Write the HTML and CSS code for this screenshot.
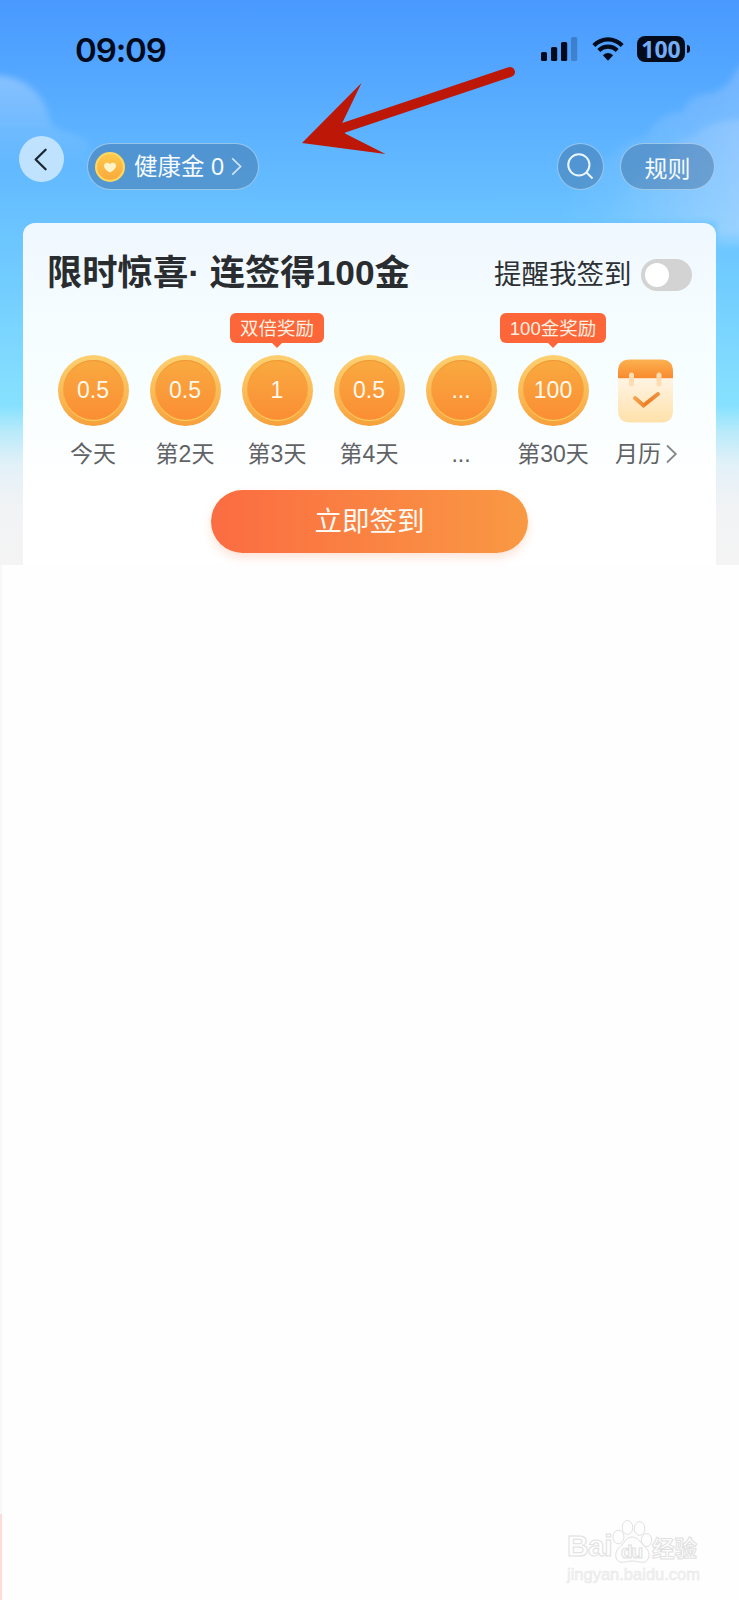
FILE: index.html
```html
<!DOCTYPE html>
<html lang="zh-CN">
<head>
<meta charset="utf-8">
<title>健康金</title>
<link rel="stylesheet" href="styles.css">
</head>
<body>
<main class="page">
  <section class="hero">
    <svg class="clouds" viewBox="0 0 739 565" aria-hidden="true">
      <defs>
        <linearGradient id="cl" x1="0" y1="0" x2="0" y2="1"><stop offset="0" stop-color="#fff" stop-opacity=".3"/><stop offset="1" stop-color="#fff" stop-opacity="0"/></linearGradient>
        <linearGradient id="cr" x1="0" y1="0" x2="1" y2="0"><stop offset="0" stop-color="#dfe6ff" stop-opacity="0"/><stop offset=".5" stop-color="#dfe6ff" stop-opacity=".12"/><stop offset="1" stop-color="#dfe6ff" stop-opacity=".24"/></linearGradient>
        <filter id="soft"><feGaussianBlur stdDeviation="3"/></filter>
      </defs>
      <g filter="url(#soft)">
        <path fill="url(#cl)" d="M-10 75C20 74 44 90 50 120C54 134 75 130 88 142L88 165H-10Z"/>
        <path fill="url(#cr)" d="M750 60Q738 66 731 80Q722 92 708 94Q688 95 683 112Q658 112 647 136Q625 140 614 154Q590 170 560 205L560 222H716V235H750Z"/>
        <path fill="url(#cr)" d="M750 120Q710 118 695 136Q670 140 660 165Q630 180 600 222H716V245H750Z"/>
      </g>
    </svg>

    <header class="status">
      <span class="clock">09:09</span>
      <div class="indicators">
        <svg class="signal" viewBox="0 0 37 24"><rect x="0" y="15" width="6" height="9" rx="1.6"/><rect x="10" y="10" width="6.2" height="14" rx="1.6"/><rect x="20" y="5" width="6.2" height="19" rx="1.6"/><rect x="30" y="0" width="6.2" height="24" rx="1.6" opacity=".22"/></svg>
        <svg class="wifi" viewBox="0 0 32 24"><g fill="none" stroke="#020b1c" stroke-width="4.2"><path d="M1.8 8.4Q8.2 2.3 16 2.3T30.2 8.4"/><path d="M6.8 13.5Q10.8 9.7 16 9.7T25.2 13.5"/></g><path d="M10.9 18.2Q16 13.9 21.1 18.2L16 23.8Z"/></svg>
        <div class="battery"><span class="level">100</span><i class="nub"></i></div>
      </div>
    </header>

    <nav class="topbar">
      <button class="back" aria-label="返回"><svg viewBox="0 0 14 24"><path d="M12.5 1.500L1.800 12L12.500 22.500"/></svg></button>
      <button class="pill balance">
        <svg class="gold" viewBox="0 0 30 30"><defs><linearGradient id="gg" x1="0" y1="0" x2="0" y2="1"><stop offset="0" stop-color="#ffc94a"/><stop offset="1" stop-color="#f9a93c"/></linearGradient></defs><circle cx="15" cy="15" r="15" fill="#ffd75e"/><circle cx="15" cy="15" r="12.8" fill="url(#gg)"/><path d="M15 20.500C12 19 9 16.500 9 13.800C9 10.500 13 9.800 15 12.300C17 9.800 21 10.500 21 13.800C21 16.500 18 19 15 20.500Z" fill="#fff3c8"/></svg>
        <span class="balance-text">健康金 0</span>
        <svg class="more" viewBox="0 0 11 20"><path d="M1 1.500L9.800 10L1 18.500"/></svg>
      </button>
      <button class="pill search" aria-label="搜索"><svg viewBox="0 0 28 28"><circle cx="12.3" cy="12.3" r="11"/><path d="M20 20L26.500 26.500"/></svg></button>
      <button class="pill rules">规则</button>
    </nav>

    <section class="card">
      <div class="card-head">
        <h1 class="title">限时惊喜· 连签得100金</h1>
        <div class="remind"><span>提醒我签到</span><span class="switch"><i class="knob"></i></span></div>
      </div>
      <div class="days">
        <div class="day"><div class="coin">0.5</div><div class="label">今天</div></div>
        <div class="day"><div class="coin">0.5</div><div class="label">第2天</div></div>
        <div class="day"><div class="badge">双倍奖励</div><div class="coin">1</div><div class="label">第3天</div></div>
        <div class="day"><div class="coin">0.5</div><div class="label">第4天</div></div>
        <div class="day"><div class="coin">...</div><div class="label">...</div></div>
        <div class="day"><div class="badge">100金奖励</div><div class="coin">100</div><div class="label">第30天</div></div>
        <div class="day">
          <svg class="calendar" viewBox="0 0 56 70">
            <defs>
              <linearGradient id="ct" x1="0" y1="0" x2="0" y2="1"><stop offset="0" stop-color="#fbb150"/><stop offset="1" stop-color="#f98a2e"/></linearGradient>
              <linearGradient id="cb" x1="0" y1="0" x2="0" y2="1"><stop offset="0" stop-color="#fff4e4"/><stop offset="1" stop-color="#ffe1aa"/></linearGradient>
              <linearGradient id="ck" x1="0" y1="0" x2="1" y2="0"><stop offset="0" stop-color="#f5a355"/><stop offset=".5" stop-color="#ef7c1f"/><stop offset="1" stop-color="#ee9144"/></linearGradient>
            </defs>
            <path d="M1 23V16Q1 4 13 4H44Q56 4 56 16V23Z" fill="url(#ct)"/>
            <path d="M1 23H56V55Q56 67 44 67H13Q1 67 1 55Z" fill="url(#cb)"/>
            <rect x="12" y="17" width="5" height="14" rx="2.5" fill="#ffdcb2"/><rect x="39.500" y="17" width="5" height="14" rx="2.5" fill="#ffdcb2"/>
            <path d="M18 42.500L26.500 50L41 38.500" fill="none" stroke="url(#ck)" stroke-width="4" stroke-linecap="round"/>
          </svg>
          <div class="label month">月历<svg viewBox="0 0 11 20"><path d="M1 1.500L9.800 10L1 18.500"/></svg></div>
        </div>
      </div>
      <button class="checkin">立即签到</button>
    </section>

    <svg class="arrow" viewBox="0 0 739 240" aria-hidden="true"><path d="M302 143L361.500 83L342 123.500L345 133.500L385.500 154Z" fill="#bd1708"/><path d="M340 129L510 72" stroke="#bd1708" stroke-width="10" stroke-linecap="round"/></svg>
  </section>

  <footer class="rest">
    <div class="edge"><i class="edge-gray"></i><i class="edge-pink"></i></div>
    <div class="mark">
      <div class="mark-row">
        <span class="bai">Bai</span>
        <span class="paw"><svg viewBox="0 0 40 43"><ellipse cx="6.500" cy="17" rx="5.500" ry="6.800"/><ellipse cx="15.500" cy="7.500" rx="5.300" ry="7"/><ellipse cx="27.500" cy="8.500" rx="5.300" ry="6.800"/><ellipse cx="34.500" cy="20" rx="5.200" ry="6.500"/><path d="M20 17C26 17 28 22 31 25C35 28 39 33 36 39C33 45 26 41 20 41C14 41 8 45 4.500 39C2 33 6 28 10 25C13 22 14 17 20 17Z"/></svg><span class="du">du</span></span>
        <span class="jy">经验</span>
      </div>
      <div class="site">jingyan.baidu.com</div>
    </div>
  </footer>
</main>
</body>
</html>
```

FILE: styles.css
```css
* { box-sizing: border-box; }
body { margin: 0; background: #fefefe; font-family: "Liberation Sans", "Noto Sans CJK SC", sans-serif; }
button { border: 0; padding: 0; font: inherit; background: none; }
svg { display: block; overflow: visible; }
.page { width: 739px; height: 1600px; display: flex; flex-direction: column; overflow: hidden; }

.hero { position: relative; height: 565px; background: linear-gradient(180deg, #4999ff 0, #57abff 95px, #68c1ff 210px, #72cdff 285px, #84deff 385px, #85e1ff 405px, #b9eafa 432px, #e3f1f8 465px, #f2f3f5 510px, #f4f4f4 565px); }
.clouds { position: absolute; inset: 0; width: 739px; height: 565px; }
.arrow { position: absolute; top: 0; left: 0; width: 739px; height: 240px; pointer-events: none; }

.status { position: relative; height: 98px; padding: 0 49px 0 75px; display: flex; justify-content: space-between; align-items: center; color: #020b1c; }
.clock { font: 600 33px/1 Inter, sans-serif; letter-spacing: -1.1px; padding-top: 3px; }
.indicators { display: flex; align-items: center; }
.signal { width: 37px; height: 24px; fill: #020b1c; margin-right: 14px; }
.wifi { width: 32px; height: 24px; fill: #020b1c; margin-right: 13px; }
.battery { display: flex; align-items: center; gap: 2px; }
.level { width: 48px; height: 26px; border-radius: 8px; background: #020b1c; color: #74adf5; font: 700 23px/26px "Noto Sans", sans-serif; text-align: center; }
.nub { width: 3px; height: 8px; border-radius: 0 4px 4px 0; background: #020b1c; }

.topbar { position: relative; height: 124.500px; padding: 38px 24px 0 19px; display: flex; align-items: flex-start; }
.back { width: 45px; height: 46px; border-radius: 50%; background: #bfe3ff; display: grid; place-items: center; padding-right: 3px; }
.back svg { width: 13px; height: 23px; fill: none; stroke: #1d2733; stroke-width: 2.5; stroke-linecap: round; stroke-linejoin: round; }
.pill { height: 47px; margin-top: 7px; border: 1px solid rgba(210, 236, 255, .55); border-radius: 24px; background: rgba(60, 105, 150, .43); color: #f5fbff; display: flex; align-items: center; }
.balance { width: 172px; margin-left: 23px; padding-left: 7px; }
.gold { width: 30px; height: 30px; }
.balance-text { font-size: 23.500px; line-height: 30px; margin-left: 9px; padding-top: 1px; white-space: nowrap; width: 89px; text-align: left; }
.more { width: 11px; height: 19px; fill: none; stroke: #cfe4f6; stroke-width: 1.8; margin-left: 8px; }
.search { width: 47px; margin-left: auto; justify-content: center; }
.search svg { width: 27px; height: 27px; fill: none; stroke: #eaf6ff; stroke-width: 2.1; }
.rules { width: 95px; margin-left: 16px; justify-content: center; font-size: 23px; }

.card { position: relative; width: 692.500px; height: 342.500px; margin-left: 23px; padding: 0 24px; border-radius: 12px 12px 0 0; background: linear-gradient(180deg, #eff7ff 0, #f5fcff 80px, #f7feff 150px, #fbfeff 215px, #fff 260px); display: flex; flex-direction: column; }
.card-head { height: 100px; display: flex; justify-content: space-between; align-items: center; }
.title { margin: 0; font-size: 35.300px; line-height: 50px; font-weight: 700; color: #2a2d30; white-space: nowrap; }
.remind { display: flex; align-items: center; gap: 9px; font-size: 27.500px; line-height: 40px; color: #2d3135; padding-top: 4px; white-space: nowrap; }
.switch { width: 51px; height: 32px; border-radius: 16px; background: #d3d3d3; display: flex; align-items: center; padding-left: 4px; }
.knob { width: 24px; height: 24px; border-radius: 50%; background: #fff; }

.days { display: grid; grid-template-columns: repeat(7, 92px); height: 167.500px; padding-top: 32px; }
.day { position: relative; display: flex; flex-direction: column; align-items: center; }
.coin { width: 71px; height: 71px; border-radius: 50%; border: 5px solid transparent; background: linear-gradient(180deg, #f9aa40, #fb8d34) padding-box, linear-gradient(180deg, #fdd070, #fbb754 60%, #f6a03b) border-box; box-shadow: inset 0 1px 1px #ed9937, inset 0 -1px 1px #ffdc66; color: #fff9ec; font-size: 23px; line-height: 61px; text-align: center; }
.label { margin-top: 11px; font-size: 23px; line-height: 34px; color: #606265; white-space: nowrap; }
.badge { position: absolute; top: -42px; height: 30px; padding: 0 10px; border-radius: 6px; background: #fc6638; color: #fff0e2; font-size: 18.500px; line-height: 31px; white-space: nowrap; }
.badge::after { content: ""; position: absolute; left: 50%; top: 29px; margin-left: -6px; border: 6px solid transparent; border-bottom-width: 0; border-top-color: #fc6638; }
.calendar { width: 56px; height: 71px; }
.month { display: flex; align-items: center; gap: 5px; padding-left: 2px; }
.month svg { width: 11px; height: 20px; fill: none; stroke: #858789; stroke-width: 1.8; }

.checkin { width: 317px; height: 63px; margin-left: 164px; border-radius: 32px; background: linear-gradient(90deg, #fb6c42, #f99943); box-shadow: 0 5px 10px rgba(250, 120, 60, .2); color: #fffaf4; font-size: 27.500px; line-height: 63px; text-align: center; }

.rest { height: 1035px; display: flex; justify-content: space-between; align-items: flex-end; background: #fefefe; }
.edge { width: 2px; height: 1035px; display: flex; flex-direction: column; }
.edge-gray { height: 949px; background: #f8f8f8; }
.edge-pink { flex: 1; background: #ffdcd8; }
.mark { width: 172px; height: 80px; color: #fefefe; -webkit-text-stroke: 1px #e0e0e0; }
.mark-row { height: 43px; display: flex; align-items: flex-end; }
.bai { width: 45px; font: 700 30px/34px "Liberation Sans", sans-serif; letter-spacing: -.6px; }
.paw { position: relative; width: 40px; height: 43px; }
.paw svg { width: 40px; height: 43px; fill: #fefefe; stroke: #e0e0e0; }
.du { position: absolute; left: 9px; top: 22px; font: 700 19px/20px "Liberation Sans", sans-serif; letter-spacing: -1px; }
.jy { font-size: 22.500px; line-height: 27px; font-weight: 700; }
.site { font: 16.500px/23px "Liberation Sans", sans-serif; color: #f2f2f2; -webkit-text-stroke: .5px #e8e8e8; }
```
